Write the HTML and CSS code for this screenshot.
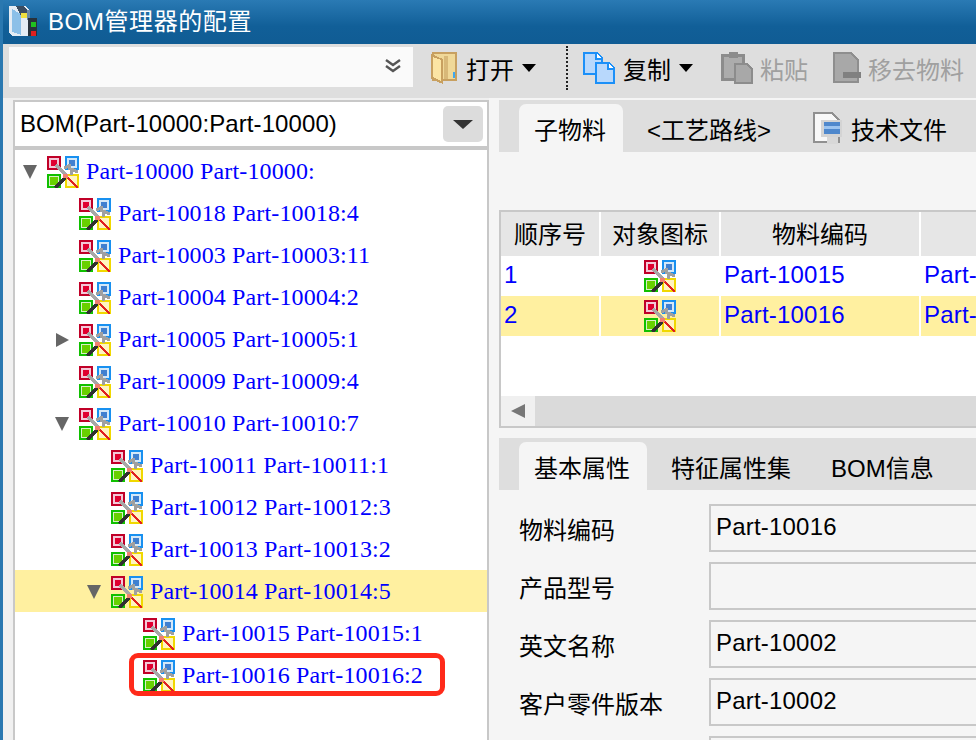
FILE: index.html
```html
<!DOCTYPE HTML>
<html>

<head>
  <meta charset="utf-8">
  <link rel="stylesheet" href="styles.css">
</head>

<body>

  <!-- shared icon for a part -->
  <svg class="defs">
    <symbol id="part" viewBox="0 0 32 32" shape-rendering="crispEdges">
      <rect x="0" y="0" width="14" height="14" fill="#c00028"/>
      <rect x="2" y="2" width="10" height="10" fill="#f4c8d8"/>
      <rect x="4" y="4" width="6" height="6" fill="#e00030"/>
      <rect x="18" y="0" width="14" height="14" fill="#1890f0"/>
      <rect x="20" y="2" width="10" height="10" fill="#d4e8f8"/>
      <rect x="22" y="4" width="6" height="6" fill="#4080d0"/>
      <rect x="0" y="18" width="14" height="14" fill="#10c000"/>
      <rect x="2" y="20" width="10" height="10" fill="#d8f0c8"/>
      <rect x="3" y="21" width="8" height="8" fill="#68d000"/>
      <rect x="18" y="18" width="14" height="14" fill="#f0d800"/>
      <rect x="20" y="20" width="10" height="10" fill="#fff4c0"/>
      <path d="M9 9 L20 20" stroke="#a8a8a8" stroke-width="3" fill="none"/>
      <path d="M17 12 L24 9 M21 12 L31 16 M26 12 L24 19" stroke="#a0a0a0" stroke-width="3" fill="none"/>
      <path d="M8 32 L18 22" stroke="#303030" stroke-width="4" fill="none"/>
      <path d="M19 20 L31 32" stroke="#e02020" stroke-width="2.5" fill="none"/>
      <rect x="16" y="18" width="5" height="4" fill="#f08070"/>
    </symbol>
  </svg>

  <div class="title">
    <svg class="app" width="28" height="32" viewBox="0 0 28 32" shape-rendering="crispEdges">
      <path d="M0 2 H16 L20 6 V10 H19 V32 H4 L0 29 Z" fill="#e4ecf4"/>
      <path d="M3 5 L12 10 V31 L3 28 Z" fill="#8cc0e8"/>
      <path d="M7 2 H14 L19 6 V12 H12 Z" fill="#3a4c60"/>
      <rect x="18" y="6" width="3" height="10" fill="#6a8aa8"/>
      <rect x="19" y="14" width="9" height="20" fill="#28323c"/>
      <rect x="12" y="9" width="6" height="5" fill="#f0e040"/>
      <rect x="22" y="18" width="5" height="5" fill="#20c020"/>
      <rect x="22" y="27" width="5" height="5" fill="#e02020"/>
    </svg>
    <span>BOM管理器的配置</span>
  </div>

  <div class="toolbar">
    <div class="search">
      <svg width="16" height="16" viewBox="0 0 16 16">
        <path d="M1 1 L8 6 L15 1 M1 7 L8 12 L15 7" stroke="#555" stroke-width="2.4" fill="none"/>
      </svg>
    </div>
    <div class="tool tool-open">
      <svg width="28" height="32" viewBox="0 0 28 32" shape-rendering="crispEdges">
        <rect x="2" y="0" width="25" height="29" fill="#c8a060"/>
        <rect x="4" y="2" width="21" height="25" fill="#f0d898"/>
        <rect x="14" y="4" width="4" height="23" fill="#d8b878"/>
        <path d="M1 2 L13 7 V32 L1 27 Z" fill="#c8a060"/>
        <path d="M3 5 L11 8 V29 L3 25 Z" fill="#fbe4a4"/>
        <rect x="23" y="20" width="2" height="6" fill="#40a8f0"/>
      </svg>
      <span>打开</span><i class="caret"></i>
    </div>
    <div class="dots"></div>
    <div class="tool tool-copy">
      <svg width="32" height="32" viewBox="0 0 32 32" shape-rendering="crispEdges">
        <path d="M1 1 H14 L19 6 V22 H1 Z" fill="#b8d8fc" stroke="#1c90f8" stroke-width="2"/>
        <path d="M13 1 V7 H19" fill="#fff" stroke="#1c90f8" stroke-width="2"/>
        <path d="M13 11 H26 L31 16 V31 H13 Z" fill="#b8d8fc" stroke="#1c90f8" stroke-width="2"/>
        <path d="M25 11 V17 H31" fill="#fff" stroke="#1c90f8" stroke-width="2"/>
      </svg>
      <span>复制</span><i class="caret"></i>
    </div>
    <div class="tool off tool-paste">
      <svg width="32" height="32" viewBox="0 0 32 32" shape-rendering="crispEdges">
        <rect x="0" y="2" width="24" height="27" fill="#8c8c8c"/>
        <rect x="3" y="5" width="18" height="21" fill="#acacac"/>
        <rect x="8" y="0" width="9" height="6" fill="#8c8c8c"/>
        <path d="M13 11 H26 L32 17 V32 H13 Z" fill="#8c8c8c"/>
        <path d="M15 13 H25 L30 18 V30 H15 Z" fill="#a8a8a8"/>
      </svg>
      <span>粘贴</span>
    </div>
    <div class="tool off tool-remove">
      <svg width="28" height="32" viewBox="0 0 28 32" shape-rendering="crispEdges">
        <path d="M0 0 H18 L26 8 V31 H0 Z" fill="#8e8e8e"/>
        <path d="M2 2 H17 L24 9 V29 H2 Z" fill="#a8a8a8"/>
        <rect x="10" y="20" width="18" height="6" fill="#808080"/>
      </svg>
      <span>移去物料</span>
    </div>
  </div>

  <div class="main">

    <div class="left">
      <div class="combo">
        <span>BOM(Part-10000:Part-10000)</span>
        <div class="combo-btn"><i class="caret big"></i></div>
      </div>
      <div class="tree">
        <div class="node lvl0"><i class="tog down"></i><svg class="ico"><use href="#part"/></svg><span>Part-10000 Part-10000:</span></div>
        <div class="node lvl1"><i class="tog"></i><svg class="ico"><use href="#part"/></svg><span>Part-10018 Part-10018:4</span></div>
        <div class="node lvl1"><i class="tog"></i><svg class="ico"><use href="#part"/></svg><span>Part-10003 Part-10003:11</span></div>
        <div class="node lvl1"><i class="tog"></i><svg class="ico"><use href="#part"/></svg><span>Part-10004 Part-10004:2</span></div>
        <div class="node lvl1"><i class="tog closed"></i><svg class="ico"><use href="#part"/></svg><span>Part-10005 Part-10005:1</span></div>
        <div class="node lvl1"><i class="tog"></i><svg class="ico"><use href="#part"/></svg><span>Part-10009 Part-10009:4</span></div>
        <div class="node lvl1"><i class="tog down"></i><svg class="ico"><use href="#part"/></svg><span>Part-10010 Part-10010:7</span></div>
        <div class="node lvl2"><i class="tog"></i><svg class="ico"><use href="#part"/></svg><span>Part-10011 Part-10011:1</span></div>
        <div class="node lvl2"><i class="tog"></i><svg class="ico"><use href="#part"/></svg><span>Part-10012 Part-10012:3</span></div>
        <div class="node lvl2"><i class="tog"></i><svg class="ico"><use href="#part"/></svg><span>Part-10013 Part-10013:2</span></div>
        <div class="node lvl2 sel"><i class="tog down"></i><svg class="ico"><use href="#part"/></svg><span>Part-10014 Part-10014:5</span></div>
        <div class="node lvl3"><i class="tog"></i><svg class="ico"><use href="#part"/></svg><span>Part-10015 Part-10015:1</span></div>
        <div class="node lvl3"><i class="tog"></i><svg class="ico"><use href="#part"/></svg><span>Part-10016 Part-10016:2</span><b class="callout"></b></div>
      </div>
    </div>

    <div class="right">
      <div class="tabs">
        <div class="tab on tab-sub">子物料</div>
        <div class="tab tab-route">&lt;工艺路线&gt;</div>
        <div class="tab tab-doc">
          <svg width="30" height="32" viewBox="0 0 30 32" shape-rendering="crispEdges">
            <path d="M1 1 H19 L26 8 V30 H1 Z" fill="#f8f8f8" stroke="#909090" stroke-width="2"/>
            <rect x="8" y="8" width="21" height="17" fill="#d4d4d4"/>
            <rect x="11" y="10" width="16" height="12" fill="#4f88cc"/>
            <rect x="11" y="14" width="16" height="3" fill="#9cc4f0"/>
            <rect x="14" y="25" width="11" height="7" fill="#d8d8d8"/>
          </svg>
          技术文件
        </div>
      </div>

      <div class="grid-box">
        <div class="grid">
          <div class="th">顺序号</div>
          <div class="th">对象图标</div>
          <div class="th">物料编码</div>
          <div class="th"></div>

          <div class="td">1</div>
          <div class="td mid"><svg class="ico"><use href="#part"/></svg></div>
          <div class="td">Part-10015</div>
          <div class="td">Part-</div>

          <div class="td hl">2</div>
          <div class="td mid hl"><svg class="ico"><use href="#part"/></svg></div>
          <div class="td hl">Part-10016</div>
          <div class="td hl">Part-</div>
        </div>
        <div class="hscroll"><div class="hscroll-btn"><i class="tri-left"></i></div></div>
      </div>

      <div class="tabs tabs-low">
        <div class="tab on tab-base">基本属性</div>
        <div class="tab tab-feat">特征属性集</div>
        <div class="tab tab-bom">BOM信息</div>
      </div>

      <div class="form">
        <label>物料编码</label><div class="field">Part-10016</div>
        <label>产品型号</label><div class="field"></div>
        <label>英文名称</label><div class="field">Part-10002</div>
        <label>客户零件版本</label><div class="field">Part-10002</div>
        <label></label><div class="field"></div>
      </div>
    </div>

  </div>

</body>
</html>
```

FILE: styles.css
```css
html, body {
  margin: 0;
  height: 740px;
  overflow: hidden;
}
body {
  font-family: "Liberation Sans", "Noto Sans CJK SC", sans-serif;
  font-size: 24px;
  color: #000;
  background: #f0f0f0;
  border-left: 3px solid #2a78b0;
  box-sizing: border-box;
  display: flex;
  flex-direction: column;
}
.defs {
  display: none;
}

/* title bar */
.title {
  height: 44px;
  flex: none;
  margin-left: -3px;
  padding: 0 0 6px 9px;
  box-sizing: border-box;
  display: flex;
  align-items: center;
  gap: 11px;
  color: #fff;
  background: linear-gradient(#2a7ab4, #115f98 60%, #105c94);
}
.title span {
  letter-spacing: 0.6px;
}
.app {
  margin-top: 2px;
}

/* toolbar */
.toolbar {
  height: 54px;
  flex: none;
  padding-left: 6px;
  display: flex;
  align-items: center;
  background: #dedede;
}
.search {
  width: 404px;
  height: 40px;
  margin-top: -8px;
  padding-right: 12px;
  box-sizing: border-box;
  display: flex;
  align-items: center;
  justify-content: flex-end;
  background: #fafafa;
}
.tool {
  display: flex;
  align-items: center;
  margin-top: -6px;
}
.tool svg {
  margin-right: 8px;
}
.tool-open {
  margin-left: 17px;
}
.tool-copy {
  margin-left: 15px;
}
.tool-paste {
  margin-left: 28px;
}
.tool-remove {
  margin-left: 25px;
}
.tool.off {
  color: #a0a0a0;
}
.tool-paste svg {
  margin-right: 7px;
}
.tool-remove svg {
  margin-right: 7px;
}
.caret {
  display: block;
  margin-left: 8px;
  border-left: 7px solid transparent;
  border-right: 7px solid transparent;
  border-top: 8px solid #000;
}
.caret.big {
  margin: 0;
  border-left-width: 10px;
  border-right-width: 10px;
  border-top: 9px solid #333;
}
.dots {
  width: 0;
  height: 44px;
  margin-left: 30px;
  margin-top: -6px;
  border-left: 2px dotted #222;
}

/* layout under the toolbar */
.main {
  flex: 1;
  min-height: 0;
  display: flex;
}

/* left part, combo and tree */
.left {
  width: 476px;
  flex: none;
  margin: 2px 0 0 10px;
  box-sizing: border-box;
  border: 2px solid #c8c8c8;
  border-bottom: 0;
  background: #fff;
  display: flex;
  flex-direction: column;
}
.combo {
  height: 44px;
  flex: none;
  padding: 0 4px 0 5px;
  display: flex;
  align-items: center;
  justify-content: space-between;
  border-bottom: 4px solid #c8c8c8;
  letter-spacing: 0.08px;
}
.combo-btn {
  width: 40px;
  height: 36px;
  border-radius: 5px;
  background: #dcdcdc;
  display: flex;
  align-items: center;
  justify-content: center;
}
.tree {
  flex: 1;
  position: relative;
  font-family: "Liberation Serif", serif;
  color: #0000ff;
}
.node {
  height: 42px;
  padding-top: 2px;
  box-sizing: border-box;
  display: flex;
  align-items: center;
  position: relative;
}
.node span {
  margin: -2px 0 0 7px;
  letter-spacing: 0.13px;
}
.lvl0 { padding-left: 8px; }
.lvl1 { padding-left: 40px; }
.lvl2 { padding-left: 72px; }
.lvl3 { padding-left: 104px; }
.node.sel {
  background: #fff0a0;
}
.tog {
  width: 24px;
  height: 14px;
  flex: none;
  position: relative;
}
.tog.down::before {
  content: "";
  position: absolute;
  top: 0;
  left: 0;
  border-left: 7px solid transparent;
  border-right: 7px solid transparent;
  border-top: 14px solid #666;
}
.tog.closed::before {
  content: "";
  position: absolute;
  top: 0;
  left: 1px;
  border-top: 7px solid transparent;
  border-bottom: 7px solid transparent;
  border-left: 13px solid #666;
}
.ico {
  width: 32px;
  height: 32px;
  flex: none;
  display: block;
}
.callout {
  position: absolute;
  left: 114px;
  top: -1px;
  width: 316px;
  height: 43px;
  box-sizing: border-box;
  border: 5px solid #ff2a1a;
  border-radius: 9px;
}

/* right part */
.right {
  flex: 1;
  min-width: 0;
  padding: 2px 0 0 10px;
  background: #f5f5f5;
  overflow: hidden;
}
.tabs {
  height: 52px;
  padding-left: 20px;
  box-sizing: border-box;
  display: flex;
  align-items: flex-end;
  background: #dedede;
}
.tab {
  height: 48px;
  box-sizing: border-box;
  flex: none;
  display: flex;
  align-items: center;
  white-space: nowrap;
}
.tab.on {
  background: #f5f5f5;
  border-radius: 7px 7px 0 0;
}
.tab-sub {
  width: 104px;
  padding-left: 15px;
}
.tab-route {
  margin-left: 24px;
}
.tab-doc {
  margin-left: 42px;
}
.tab-doc svg {
  margin-right: 8px;
}
.tab-base {
  width: 128px;
  padding-left: 15px;
}
.tab-feat {
  margin-left: 24px;
}
.tab-bom {
  margin-left: 40px;
}

/* grid */
.grid-box {
  height: 218px;
  margin-top: 58px;
  box-sizing: border-box;
  border: 2px solid #c8c8c8;
  border-right: 0;
  background: #fff;
  display: flex;
  flex-direction: column;
  justify-content: space-between;
}
.grid {
  display: grid;
  grid-template-columns: 98px 118px 198px 1fr;
  grid-template-rows: 44px 40px 40px;
  column-gap: 2px;
}
.th {
  padding-bottom: 3px;
  box-sizing: border-box;
  display: flex;
  align-items: center;
  justify-content: center;
  background: #e6e6e6;
}
.td {
  padding: 0 0 2px 3px;
  box-sizing: border-box;
  color: #0000ff;
  letter-spacing: 0.2px;
  display: flex;
  align-items: center;
  overflow: hidden;
  white-space: nowrap;
}
.td.mid {
  padding: 0;
  justify-content: center;
}
.td.hl {
  background: #fff0a0;
}
.hscroll {
  height: 30px;
  background: #dadada;
}
.hscroll-btn {
  width: 34px;
  height: 30px;
  background: #f0f0f0;
  display: flex;
  align-items: center;
  justify-content: center;
}
.tri-left {
  display: block;
  border-top: 7px solid transparent;
  border-bottom: 7px solid transparent;
  border-right: 14px solid #777;
}
.tabs-low {
  margin-top: 10px;
}

/* form */
.form {
  padding: 14px 0 0 20px;
  display: grid;
  grid-template-columns: 190px 1fr;
  grid-auto-rows: 48px;
  row-gap: 10px;
}
.form label {
  display: flex;
  align-items: center;
}
.field {
  margin-right: -4px;
  padding-left: 5px;
  padding-bottom: 2px;
  box-sizing: border-box;
  border: 2px solid #c8c8c8;
  letter-spacing: 0.2px;
  display: flex;
  align-items: center;
}
```
